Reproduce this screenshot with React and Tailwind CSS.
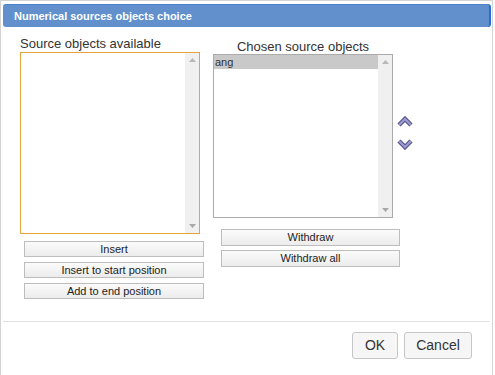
const Scrollbar = () => (
  <div className="w-[14px] h-full bg-[#f0f0f0] flex flex-col justify-between items-center py-[5px]">
    <svg width="7" height="4" viewBox="0 0 7 4">
      <polygon points="0,4 7,4 3.5,0" fill="#b8b8b8" />
    </svg>
    <svg width="7" height="4" viewBox="0 0 7 4">
      <polygon points="0,0 7,0 3.5,4" fill="#a8a8a8" />
    </svg>
  </div>
);

const SmallButton = ({ children }) => (
  <button className="w-full h-[16px] border border-[#bdbdbd] bg-gradient-to-b from-[#fbfbfb] to-[#ececec] text-[11px] leading-[14px] text-[#222]">
    {children}
  </button>
);

const Arrow = ({ up }) => (
  <svg width="16" height="11" viewBox="0 0 16 11">
    <polyline
      points={up ? "2,9 8,3 14,9" : "2,2 8,8 14,2"}
      fill="none"
      stroke="#55558e"
      strokeWidth="4.5"
      strokeLinejoin="miter"
    />
    <polyline
      points={up ? "2,9 8,3 14,9" : "2,2 8,8 14,2"}
      fill="none"
      stroke="#9c9cd2"
      strokeWidth="2.2"
      strokeLinejoin="miter"
    />
  </svg>
);

const App = () => {
  return (
    <div className="w-[495px] h-[375px] bg-white font-['Liberation_Sans',Arial,sans-serif]">
      <div className="w-[493px] h-[375px] border-t border-l border-r border-[#d4d4d4] flex flex-col">
        {/* TITLE */}
        <div className="ml-[2px] mr-[1px] mt-[3px] h-[23px] bg-[#6190cc] rounded-[3px] border-t border-[#4f81c9] border-r-2 border-r-[#2b6cd4] flex items-center pl-[11px]">
          <span className="text-[11px] font-bold text-white">Numerical sources objects choice</span>
        </div>

        {/* BODY */}
        <div className="h-[294px] pl-[19px] pt-[9px] flex">
          {/* LEFT */}
          <div className="w-[180px] flex flex-col">
            <div className="text-[13px] leading-[15px] text-[#333] mb-[1px]">Source objects available</div>
            <div className="h-[182px] border border-[#e6a43c] flex">
              <div className="flex-1" />
              <Scrollbar />
            </div>
            <div className="ml-[4px] w-[180px] mt-[7px] flex flex-col gap-[5px]">
              <SmallButton>Insert</SmallButton>
              <SmallButton>Insert to start position</SmallButton>
              <SmallButton>Add to end position</SmallButton>
            </div>
          </div>

          {/* RIGHT */}
          <div className="w-[180px] ml-[13px] mt-[3px] flex flex-col">
            <div className="text-[13px] leading-[15px] text-[#333] text-center">Chosen source objects</div>
            <div className="h-[164px] border border-[#ababab] flex">
              <div className="flex-1">
                <div className="h-[14px] bg-[#c9c9c9] text-[11px] leading-[14px] text-[#333] pl-[1px]">ang</div>
              </div>
              <Scrollbar />
            </div>
            <div className="ml-[8px] w-[179px] mt-[11px] flex flex-col gap-[4px]">
              <button className="w-full h-[17px] border border-[#bdbdbd] bg-gradient-to-b from-[#fbfbfb] to-[#ececec] text-[11px] leading-[15px] text-[#222]">Withdraw</button>
              <button className="w-full h-[17px] border border-[#bdbdbd] bg-gradient-to-b from-[#fbfbfb] to-[#ececec] text-[11px] leading-[15px] text-[#222]">Withdraw all</button>
            </div>
          </div>

          {/* ARROWS */}
          <div className="ml-[4px] pt-[80px] flex flex-col gap-[12px]">
            <Arrow up />
            <Arrow />
          </div>
        </div>

        {/* FOOTER */}
        <div className="mx-[2px] border-t border-[#e2e2e2] pt-[10px] pr-[18px] flex justify-end gap-[6px]">
          <button className="w-[46px] h-[27px] rounded-[3px] border border-[#c6c6c6] bg-[#f6f6f6] text-[14px] text-[#333]">OK</button>
          <button className="w-[68px] h-[27px] rounded-[3px] border border-[#c6c6c6] bg-[#f6f6f6] text-[14px] text-[#333]">Cancel</button>
        </div>
      </div>
    </div>
  );
};

export default App;
